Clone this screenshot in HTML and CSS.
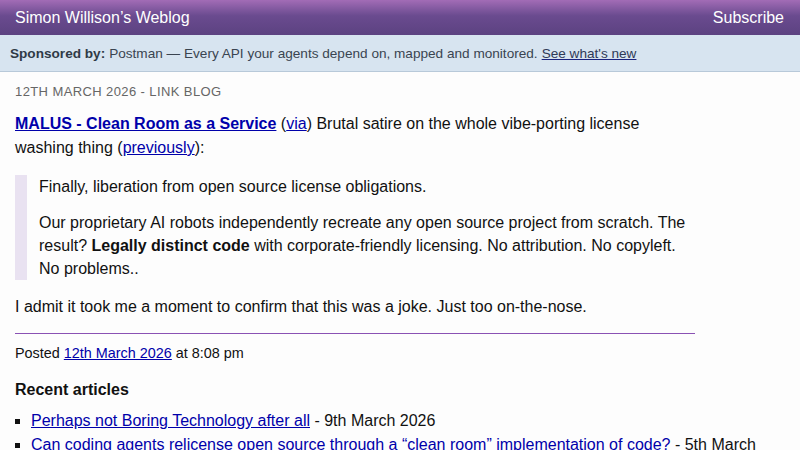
FILE: index.html
```html
<!DOCTYPE html>
<html>
<head>
<meta charset="utf-8">
<link rel="stylesheet" href="styles.css">
</head>
<body>
<header class="hdr">
  <a class="hdr-title" href="#">Simon Willison’s Weblog</a>
  <a class="hdr-sub" href="#">Subscribe</a>
</header>
<div class="sponsor">
  <strong>Sponsored by:</strong> Postman — Every API your agents depend on, mapped and monitored. <a href="#">See what's new</a>
</div>
<main class="main">
  <p class="meta">12th March 2026 - Link Blog</p>
  <p class="lead"><a class="title" href="#">MALUS - Clean Room as a Service</a> (<a href="#">via</a>) Brutal satire on the whole vibe-porting license washing thing (<a href="#">previously</a>):</p>
  <blockquote class="quote">
    <p>Finally, liberation from open source license obligations.</p>
    <p>Our proprietary AI robots independently recreate any open source project from scratch. The result? <strong>Legally distinct code</strong> with corporate-friendly licensing. No attribution. No copyleft. No problems..</p>
  </blockquote>
  <p class="lead">I admit it took me a moment to confirm that this was a joke. Just too on-the-nose.</p>
  <div class="posted">Posted <a href="#">12th March 2026</a> at 8:08 pm</div>
  <h3 class="recent-h">Recent articles</h3>
  <ul class="recent">
    <li><a href="#">Perhaps not Boring Technology after all</a> - 9th March 2026</li>
    <li><a href="#">Can coding agents relicense open source through a “clean room” implementation of code?</a> - 5th March 2026</li>
  </ul>
</main>
</body>
</html>
```
FILE: styles.css
```css
html, body {
  margin: 0;
  padding: 0;
  background: #fdfdfd;
  font-family: "Liberation Sans", Arial, sans-serif;
  color: #111;
  overflow: hidden;
}
a { color: #0000aa; }
.hdr {
  height: 35px;
  display: flex;
  align-items: center;
  justify-content: space-between;
  padding: 0 16px 0 15px;
  background: linear-gradient(to bottom, #a26cb6 0%, #6a4b8f 45%, #5c4281 100%);
}
.hdr a {
  color: #fff;
  text-decoration: none;
  font-size: 16px;
}
.sponsor {
  height: 37px;
  box-sizing: border-box;
  display: flex;
  align-items: center;
  gap: 4px;
  padding: 0 10px;
  background: #d7e4f0;
  border-bottom: 1px solid #b8c9d9;
  font-size: 13.6px;
  color: #3a4450;
  white-space: nowrap;
}
.sponsor strong { color: #2f3a46; }
.sponsor a { color: #2f3a56; text-decoration-color: #1a237e; }
.main {
  width: 680px;
  padding: 0 15px;
}
.meta {
  margin: 12px 0 0;
  font-size: 13px;
  line-height: 16px;
  text-transform: uppercase;
  letter-spacing: 0.4px;
  color: #666;
}
.lead {
  margin: 12px 0 0;
  font-size: 16px;
  line-height: 24px;
}
.title { font-weight: bold; }
.quote {
  margin: 15px 0 0;
  padding: 0 0 0 12px;
  border-left: 12px solid #e9e2f1;
}
.quote p {
  margin: 0 0 12px;
  font-size: 16px;
  line-height: 23px;
}
.quote p:first-child { margin-bottom: 13px; }
.quote p:last-child { margin-bottom: 0; }
.quote + .lead { margin-top: 15px; }
.posted {
  margin-top: 14px;
  padding-top: 9px;
  border-top: 1px solid #8a52b4;
  font-size: 14.4px;
  line-height: 20px;
}
.recent-h {
  margin: 16px 0 0;
  font-size: 16px;
  line-height: 22px;
}
.recent {
  margin: 8px 0 0;
  padding-left: 16px;
  list-style: square;
  font-size: 16px;
  line-height: 24px;
  width: 750px;
}
```
